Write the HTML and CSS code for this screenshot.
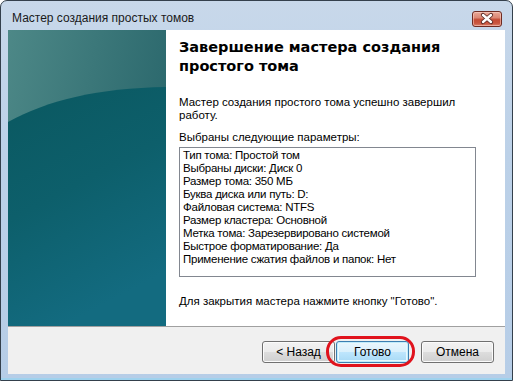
FILE: index.html
```html
<!DOCTYPE html>
<html lang="ru">
<head>
<meta charset="utf-8">
<title>Мастер создания простых томов</title>
<link rel="stylesheet" href="styles.css">
</head>
<body>
<div class="window">
  <div class="titlebar">
    <span class="title">Мастер создания простых томов</span>
    <div class="close">
      <svg width="30" height="16" viewBox="0 0 30 16">
        <path d="M11 4 L19 11 M19 4 L11 11" stroke="#5a2a24" stroke-width="4.2" stroke-linecap="round"/>
        <path d="M11 4 L19 11 M19 4 L11 11" stroke="#ffffff" stroke-width="2.4" stroke-linecap="round"/>
      </svg>
    </div>
  </div>
  <div class="client">
    <div class="main">
      <div class="banner">
        <svg class="art" viewBox="0 0 158 296" preserveAspectRatio="none">
          <defs>
            <linearGradient id="topg" x1="0" y1="0" x2="1" y2="0.4">
              <stop offset="0" stop-color="#4d8887"/>
              <stop offset="1" stop-color="#2a676c"/>
            </linearGradient>
            <linearGradient id="lowg" x1="0" y1="0" x2="0.35" y2="1">
              <stop offset="0" stop-color="#0a5860"/>
              <stop offset="0.5" stop-color="#0d5f6b"/>
              <stop offset="1" stop-color="#136b80"/>
            </linearGradient>
          </defs>
          <rect width="158" height="296" fill="url(#topg)"/>
          <path d="M0 92 C40 70 90 58 158 57 L158 296 L0 296 Z" fill="url(#lowg)"/>
        </svg>
      </div>
      <div class="content">
        <h1 class="heading">Завершение мастера создания простого тома</h1>
        <p class="intro">Мастер создания простого тома успешно завершил работу.</p>
        <p class="label">Выбраны следующие параметры:</p>
        <div class="summary">
          <div class="row">Тип тома: Простой том</div>
          <div class="row">Выбраны диски: Диск 0</div>
          <div class="row">Размер тома: 350 МБ</div>
          <div class="row">Буква диска или путь: D:</div>
          <div class="row">Файловая система: NTFS</div>
          <div class="row">Размер кластера: Основной</div>
          <div class="row">Метка тома: Зарезервировано системой</div>
          <div class="row">Быстрое форматирование: Да</div>
          <div class="row">Применение сжатия файлов и папок: Нет</div>
        </div>
        <p class="hint">Для закрытия мастера нажмите кнопку "Готово".</p>
      </div>
    </div>
    <div class="footer">
      <button class="btn btn-back">&lt; Назад</button>
      <div class="finish-wrap">
        <button class="btn btn-default">Готово</button>
        <span class="ring"></span>
      </div>
      <button class="btn">Отмена</button>
    </div>
  </div>
</div>
</body>
</html>
```

FILE: styles.css
```css
html, body {
  margin: 0;
  padding: 0;
  background: #ffffff;
}

.window {
  width: 513px;
  height: 381px;
  box-sizing: border-box;
  border: 1px solid #34404c;
  border-radius: 7px 7px 0 0;
  background: linear-gradient(180deg, #c8d8ea 0%, #bcd1e8 40%, #b6cde7 100%);
  box-shadow: inset 0 -2px 0 #9fd2ee;
  padding: 0 7px 6px 7px;
  display: flex;
  flex-direction: column;
  font-family: "Liberation Sans", Arial, sans-serif;
  font-size: 11.5px;
  color: #000;
}

.titlebar {
  height: 29px;
  display: flex;
  align-items: flex-start;
  justify-content: space-between;
  flex: none;
}

.title {
  margin: 10px 0 0 4px;
  line-height: 15px;
  font-size: 12px;
  color: #1a1a1a;
}

.close {
  width: 30px;
  height: 16px;
  margin: 10px 3px 0 0;
  box-sizing: border-box;
  border: 1px solid #6e2b22;
  border-radius: 3px;
  background: linear-gradient(180deg, #e9a897 0%, #dc8875 40%, #c44b34 55%, #c9553e 80%, #d9806a 100%);
  box-shadow: inset 0 0 0 1px rgba(255, 220, 210, 0.5);
  display: flex;
  align-items: center;
  justify-content: center;
  overflow: hidden;
}

.close svg {
  display: block;
  margin: -1px;
}

.client {
  flex: 1;
  display: flex;
  flex-direction: column;
  background: #f0f0f0;
}

.main {
  height: 296px;
  display: flex;
  flex: none;
}

.banner {
  width: 158px;
  flex: none;
}

.art {
  display: block;
  width: 158px;
  height: 296px;
}

.content {
  flex: 1;
  background: #ffffff;
  padding: 8px 0 0 13px;
}

.heading {
  margin: 0;
  font-family: "DejaVu Sans", Verdana, sans-serif;
  font-weight: bold;
  font-size: 14.5px;
  line-height: 19px;
  width: 300px;
}

.intro {
  margin: 20px 0 0 0;
  line-height: 13px;
  width: 290px;
}

.label {
  margin: 9px 0 0 0;
  line-height: 13px;
}

.summary {
  margin-top: 3px;
  width: 297px;
  height: 130px;
  box-sizing: border-box;
  border: 1px solid #828790;
  padding: 1px 3px;
  background: #ffffff;
}

.row {
  line-height: 13px;
  white-space: nowrap;
  letter-spacing: -0.25px;
}

.hint {
  margin: 18px 0 0 0;
  line-height: 13px;
}

.footer {
  flex: 1;
  border-top: 1px solid #a0a0a0;
  display: flex;
  justify-content: flex-end;
  align-items: flex-start;
  padding: 14px 11px 0 0;
}

.btn {
  width: 73px;
  height: 22px;
  padding: 0;
  font-family: "Liberation Sans", Arial, sans-serif;
  font-size: 12px;
  color: #000;
  border: 1px solid #707070;
  border-radius: 3px;
  background: linear-gradient(180deg, #f2f2f2 0%, #ebebeb 50%, #dddddd 51%, #cfcfcf 100%);
  box-shadow: inset 0 0 0 1px #fbfbfb;
}

.btn-back {
  margin-right: 1px;
}

.finish-wrap {
  position: relative;
  margin-right: 12px;
}

.btn-default {
  display: block;
  border-color: #3c7fb1;
  background: linear-gradient(180deg, #eaf6fd 0%, #d9f0fc 50%, #bee6fd 51%, #a7d9f5 100%);
  box-shadow: inset 0 0 0 1px #c2ecfb, inset 0 0 0 2px #e8f7fd;
}

.ring {
  position: absolute;
  left: -10px;
  top: -5px;
  width: 89px;
  height: 31px;
  box-sizing: border-box;
  border: 3px solid #e0121c;
  border-radius: 15px;
  pointer-events: none;
}
```
